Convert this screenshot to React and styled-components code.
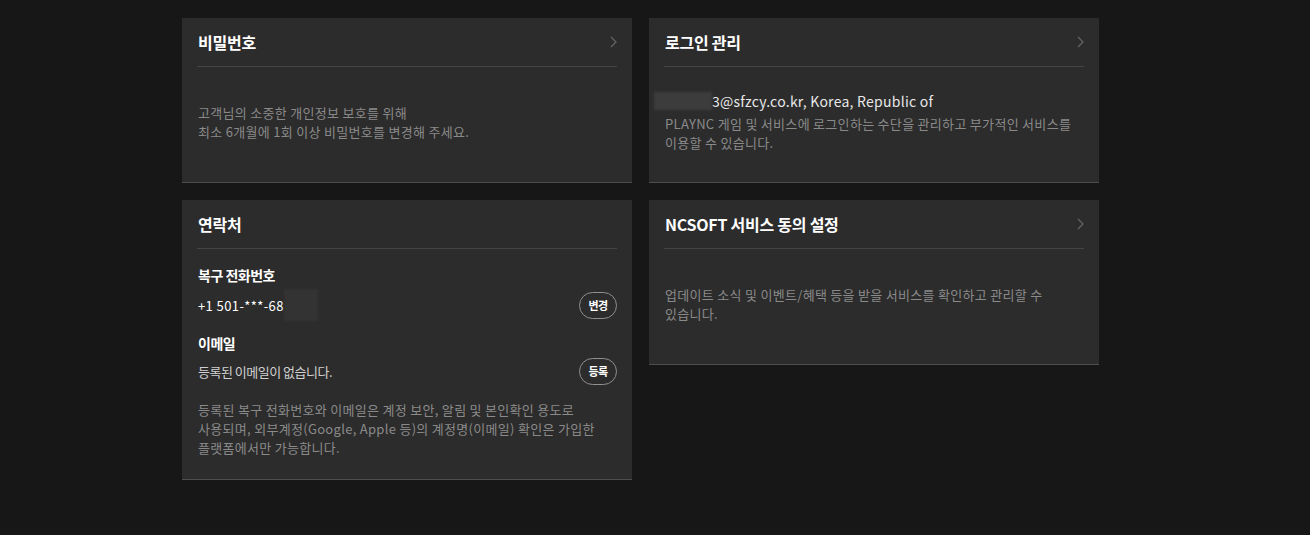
import styled, { createGlobalStyle } from "styled-components";

const GlobalStyle = createGlobalStyle`
  html, body {
    margin: 0;
    padding: 0;
    background: #171717;
  }
  body {
    font-family: "Noto Sans CJK KR", "Noto Sans", sans-serif;
    color: #fff;
  }
`;

const Page = styled.div`
  display: grid;
  grid-template-columns: 450px 450px;
  gap: 17px;
  align-items: start;
  align-content: start;
  padding: 18px 0 0 182px;
  min-height: 535px;
  box-sizing: border-box;
`;

const Card = styled.section`
  display: flex;
  flex-direction: column;
  min-height: 165px;
  box-sizing: border-box;
  background: #2c2c2c;
  border-bottom: 1px solid #4e4e4e;
  padding: 0 15px;
`;

const Header = styled.div`
  display: flex;
  align-items: center;
  justify-content: space-between;
  height: 49px;
  border-bottom: 1px solid #444;
  padding: 0 0 0 1px;
  box-sizing: border-box;
`;

const Title = styled.h2`
  margin: 0;
  font-size: 16px;
  font-weight: 700;
  letter-spacing: -0.25px;
  line-height: 20px;
  color: #fff;
`;

const Chevron = () => (
  <svg width="7" height="12" viewBox="0 0 7 12" fill="none">
    <path d="M1 1l5 5-5 5" stroke="#666" strokeWidth="1.2" />
  </svg>
);

const Body = styled.div`
  flex: 1;
  display: flex;
  flex-direction: column;
  justify-content: center;
  padding: 0 1px 6px;
`;

const Desc = styled.p`
  margin: 0;
  font-size: 13px;
  line-height: 19px;
  letter-spacing: 0.3px;
  color: #8a8a8a;
`;

const Account = styled.div`
  display: flex;
  align-items: center;
  font-size: 14px;
  line-height: 20px;
  letter-spacing: 0.25px;
  color: #e8e8e8;
  margin-bottom: 3px;
`;

const Masked = styled.span`
  display: inline-block;
  width: ${({ $w }) => $w}px;
  height: ${({ $h }) => $h}px;
  margin-left: ${({ $ml }) => $ml || 0}px;
  background: ${({ $bg }) => $bg};
  filter: blur(1px);
`;

const ContactBody = styled.div`
  display: flex;
  flex-direction: column;
  padding: 16px 0 22px 1px;
`;

const Label = styled.h3`
  margin: ${({ $first }) => ($first ? "0 0 7px" : "15px 0 5px")};
  font-size: 14px;
  font-weight: 700;
  line-height: 20px;
  letter-spacing: -0.5px;
  color: #fff;
`;

const Row = styled.div`
  display: flex;
  align-items: center;
  justify-content: space-between;
  height: 26px;
`;

const Value = styled.span`
  display: flex;
  align-items: center;
  font-size: 13px;
  letter-spacing: ${({ $muted }) => ($muted ? "-0.5px" : "0.4px")};
  color: ${({ $muted }) => ($muted ? "#d0d0d0" : "#fff")};
`;

const PillButton = styled.button`
  width: 38px;
  height: 27px;
  border: 1px solid #8f8f8f;
  border-radius: 14px;
  background: transparent;
  color: #fff;
  font-family: inherit;
  font-size: 11px;
  font-weight: 700;
  letter-spacing: -0.5px;
  padding: 0;
  cursor: pointer;
`;

const ContactDesc = styled(Desc)`
  margin-top: 16px;
`;

export default function App() {
  return (
    <>
      <GlobalStyle />
      <Page>
        <Card>
          <Header>
            <Title>비밀번호</Title>
            <Chevron />
          </Header>
          <Body>
            <Desc>
              고객님의 소중한 개인정보 보호를 위해
              <br />
              최소 6개월에 1회 이상 비밀번호를 변경해 주세요.
            </Desc>
          </Body>
        </Card>

        <Card>
          <Header>
            <Title>로그인 관리</Title>
            <Chevron />
          </Header>
          <Body>
            <Account>
              <Masked $w={58} $h={18} $ml={-11} $bg="#3c3c3c" />
              3@sfzcy.co.kr, Korea, Republic of
            </Account>
            <Desc>
              PLAYNC 게임 및 서비스에 로그인하는 수단을 관리하고 부가적인 서비스를
              <br />
              이용할 수 있습니다.
            </Desc>
          </Body>
        </Card>

        <Card>
          <Header>
            <Title>연락처</Title>
          </Header>
          <ContactBody>
            <Label $first>복구 전화번호</Label>
            <Row>
              <Value>
                +1 501-***-68
                <Masked $w={34} $h={32} $bg="#333333" />
              </Value>
              <PillButton>변경</PillButton>
            </Row>
            <Label>이메일</Label>
            <Row>
              <Value $muted>등록된 이메일이 없습니다.</Value>
              <PillButton>등록</PillButton>
            </Row>
            <ContactDesc>
              등록된 복구 전화번호와 이메일은 계정 보안, 알림 및 본인확인 용도로
              <br />
              사용되며, 외부계정(Google, Apple 등)의 계정명(이메일) 확인은 가입한
              <br />
              플랫폼에서만 가능합니다.
            </ContactDesc>
          </ContactBody>
        </Card>

        <Card>
          <Header>
            <Title>NCSOFT 서비스 동의 설정</Title>
            <Chevron />
          </Header>
          <Body>
            <Desc>
              업데이트 소식 및 이벤트/혜택 등을 받을 서비스를 확인하고 관리할 수
              <br />
              있습니다.
            </Desc>
          </Body>
        </Card>
      </Page>
    </>
  );
}
